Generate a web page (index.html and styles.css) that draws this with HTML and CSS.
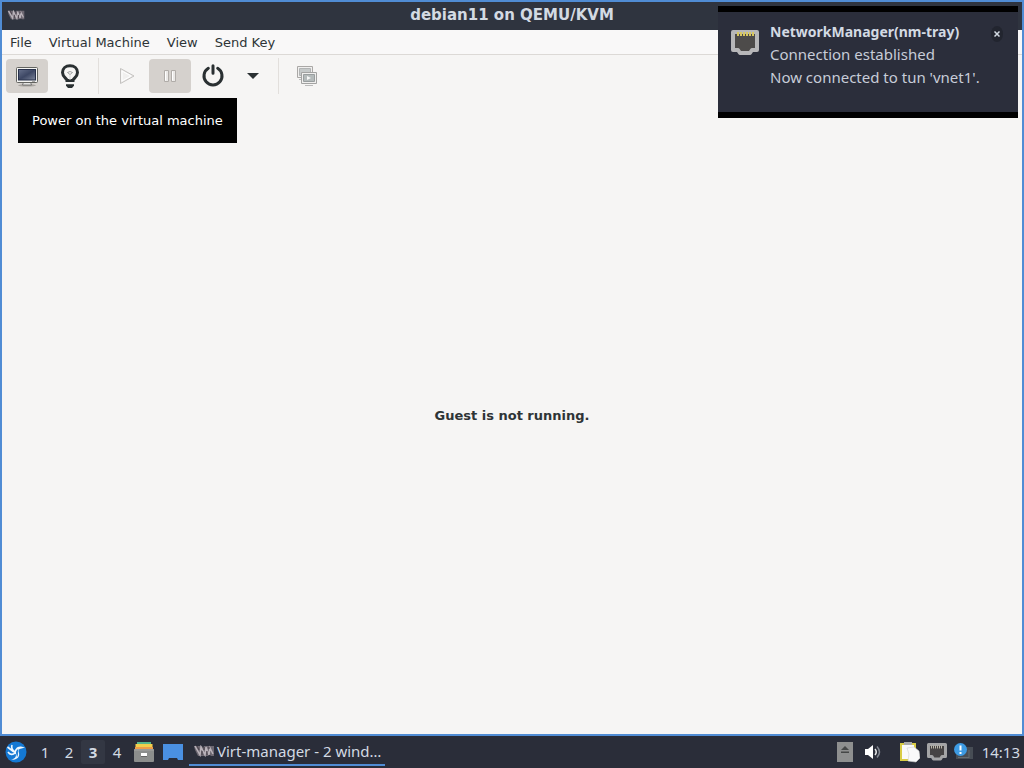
FILE: index.html
```html
<!DOCTYPE html>
<html lang="en">
<head>
<meta charset="utf-8">
<title>debian11 on QEMU/KVM</title>
<link rel="stylesheet" href="styles.css">
</head>
<body>
<svg class="defs" width="0" height="0" aria-hidden="true">
  <symbol id="vm-logo" viewBox="0 0 20 12">
    <path d="M0 1h8l1 2 1-2h10v10h-3l-2-2-1 2H4L1 5z" fill="#6d6872"/>
    <path d="M1 1l5 9 1-8 4 8 1-8 3 8 1-7 3 6" fill="none" stroke="#b9b2b9" stroke-width="1.500"/>
    <path d="M3 1l2 4M10 2v3M8 6v4M15 2v2M13 6v4" stroke="#494049"/>
  </symbol>
</svg>
<main class="window">
  <header class="titlebar">
    <svg class="title-icon" width="18" height="10" aria-hidden="true"><use href="#vm-logo"/></svg>
    <h1 class="title">debian11 on QEMU/KVM</h1>
  </header>
  <nav class="menubar">
    <button class="menu">File</button>
    <button class="menu">Virtual Machine</button>
    <button class="menu">View</button>
    <button class="menu">Send Key</button>
  </nav>
  <div class="toolbar">
    <div class="tool-wrap">
      <button class="tool active" aria-label="Show the graphical console">
        <svg width="24" height="24" viewBox="0 0 24 24">
          <defs><linearGradient id="scr" x2="1" y2="1"><stop stop-color="#67718c"/><stop offset=".5" stop-color="#3d4764"/><stop offset="1" stop-color="#7c859b"/></linearGradient></defs>
          <ellipse cx="12" cy="21.300" rx="9" ry="1.200" fill="#a9a5a0"/>
          <path d="M8.500 18h7l1 3h-9z" fill="#e4e4e2" stroke="#666" stroke-width=".8"/>
          <rect x="1.500" y="3.500" width="21" height="15" rx="1" fill="#f3f3f1" stroke="#62635f"/>
          <rect x="3.500" y="5.500" width="17" height="10.500" fill="url(#scr)" stroke="#27304b"/>
          <path d="M17 17.300h3" stroke="#999"/>
        </svg>
      </button>
      <div class="tooltip" role="tooltip">Power on the virtual machine</div>
    </div>
    <button class="tool" aria-label="Show virtual hardware details">
      <svg width="24" height="24" viewBox="0 0 24 24">
        <path d="M9 16.500c0-2-4.500-3.500-4.500-8C4.500 4.500 7.700 1.700 12 1.700s7.500 2.800 7.500 6.800c0 4.500-4.500 6-4.500 8z" fill="none" stroke="#2a3032" stroke-width="3"/>
        <path d="M9.500 8.500l2.500 2 2.500-2-2.500-1z" fill="none" stroke="#8a8e8e" stroke-width=".8"/>
        <path d="M12 11v5" stroke="#d9dada"/>
        <path d="M8 20.200h8v1.500l-2 2.300h-4l-2-2.300z" fill="#2a3032"/>
      </svg>
    </button>
    <span class="divider"></span>
    <button class="tool" aria-label="Power on the virtual machine">
      <svg width="24" height="24" viewBox="0 0 24 24"><path d="M5.500 4.500v15L19 12z" fill="#f1f0ef" stroke="#c4c2c0"/><path d="M7 7v10l9-5z" fill="none" stroke="#fff"/></svg>
    </button>
    <button class="tool active" aria-label="Pause the virtual machine">
      <svg width="24" height="24" viewBox="0 0 24 24"><path d="M6.500 6.500h4v11h-4zM13.500 6.500h4v11h-4z" fill="#ebe9e7" stroke="#b0aca8"/><path d="M7.500 7.500v9M14.500 7.500v9" stroke="#fff"/></svg>
    </button>
    <button class="tool" aria-label="Shut down the virtual machine">
      <svg width="24" height="24" viewBox="0 0 24 24" fill="none" stroke="#2a3032" stroke-width="3" stroke-linecap="round"><path d="M7.300 4.300a9 9 0 1 0 9.400 0M12 1.800v7.500"/></svg>
    </button>
    <button class="tool narrow" aria-label="Shutdown options">
      <svg width="12" height="6" viewBox="0 0 12 6"><path d="M0 0h12L6 6z" fill="#2a3032"/></svg>
    </button>
    <span class="divider"></span>
    <button class="tool" aria-label="Manage snapshots">
      <svg width="24" height="24" viewBox="0 0 24 24">
        <path d="M2.500 2.500h15v11h-15z" fill="#f0efee" stroke="#aaa8a6"/><path d="M4.500 4.500h11v7h-11z" fill="#c5c9c9" stroke="#b2b4b4"/><path d="M4 15.500h5" stroke="#bbb"/>
        <path d="M6.500 8.500h15v11h-15z" fill="#f0efee" stroke="#a3a3a2"/><path d="M8.500 10.500h11v7h-11z" fill="#b5bbbb" stroke="#999e9f"/>
        <path d="M12 12l4 2-4 2z" fill="#f7f7f7"/><path d="M10 21.500h8" stroke="#bbb"/>
      </svg>
    </button>
  </div>
  <section class="console"><p class="status">Guest is not running.</p></section>
</main>

<aside class="notification" role="status">
  <svg class="note-icon" width="28" height="26" viewBox="0 0 28 26">
    <path d="M2 2h24v18h-5l-2 3H9l-2-3H2z" fill="#4d4b4a" stroke="#b7b7b9" stroke-width="4" stroke-linejoin="round"/>
    <path d="M6 4h17" stroke="#d8c760" stroke-width="4" stroke-dasharray="2 1"/>
  </svg>
  <div class="note-text">
    <h2 class="note-title">NetworkManager(nm-tray)</h2>
    <p class="note-line">Connection established</p>
    <p class="note-line">Now connected to tun 'vnet1'.</p>
  </div>
  <button class="note-close" aria-label="Close"><svg width="6" height="6" viewBox="0 0 6 6"><path d="M.5.5l5 5M5.500.5l-5 5" stroke="#d3dae3" stroke-width="1.500"/></svg></button>
</aside>

<footer class="taskbar">
  <button class="start" aria-label="Application menu">
    <svg width="22" height="22" viewBox="0 0 22 22">
      <circle cx="11" cy="11" r="10.500" fill="#1478d3"/>
      <path d="M2.500 6l6.500 5M7 4c-1 3 0 5 3 7M3 11c2 3 5 3 7 1" fill="none" stroke="#eff7fd" stroke-width="1.600"/>
      <path d="M9 12c1-4 3-7 7-6.500l4 1-3.500 1c-3 .5-3.500 2-2.500 4.500 1 4-2 7-8 7 4-1.500 5-3 5-5.500z" fill="#eff7fd"/>
      <path d="M11 12c0-2 1-3.500 2.500-4-1.500 3 .5 5-1.500 8z" fill="#1478d3"/>
    </svg>
  </button>
  <nav class="desktops">
    <button class="desktop">1</button><button class="desktop">2</button><button class="desktop current">3</button><button class="desktop">4</button>
  </nav>
  <button class="launcher" aria-label="File manager">
    <svg width="20" height="20" viewBox="0 0 20 20"><path d="M3 0h14v3H3z" fill="#55b58b"/><path d="M1.500 2h17v3h-17z" fill="#f2cf4c"/><path d="M1 5h18v2H1z" fill="#ef9d48"/><rect y="7" width="20" height="13" rx="1" fill="#8c8e8d"/><path d="M0 8h20" stroke="#a5a6a4"/><path d="M7 11h6v3H7z" fill="#fff"/><path d="M7 14.500h6" stroke="#666"/></svg>
  </button>
  <button class="launcher" aria-label="Show desktop">
    <svg width="20" height="16" viewBox="0 0 20 16"><path d="M0 0h20v16h-5l-1-2H6l-1 2H0z" fill="#4a90e2"/></svg>
  </button>
  <button class="task"><svg class="task-icon" width="20" height="12" aria-hidden="true"><use href="#vm-logo"/></svg><span class="task-label">Virt-manager - 2 wind…</span></button>
  <div class="tray">
    <button class="tray-item" aria-label="Removable media"><svg width="16" height="20" viewBox="0 0 16 20"><path d="M0 0h16v20H0z" fill="#8e8f8f"/><path d="M8 4l4 4H4zM4 9.500h8V11H4z" fill="#454747"/></svg></button>
    <button class="tray-item volume" aria-label="Volume"><svg width="16" height="16" viewBox="0 0 16 16"><path d="M0 5h3l5-4v14l-5-4H0z" fill="#fff"/><path d="M10 5q2.500 3 0 6" fill="none" stroke="#e8e8e8" stroke-width="1.500"/><path d="M12 2.500q5 5.500 0 11" fill="none" stroke="#80858f" stroke-width="1.500"/></svg></button>
    <button class="tray-item" aria-label="Clipboard"><svg width="20" height="22" viewBox="0 0 20 22"><path d="M0 2h16v18H0z" fill="#d9cc45"/><path d="M2 4h12v14H2z" fill="#fafafa"/><path d="M4 1h8v3H4z" fill="#ababa9"/><path d="M7 7l7-1 5 4 1 7-4 4-8-1 1-7z" fill="#fafafa" stroke="#d4d4d2" stroke-width=".6"/></svg></button>
    <button class="tray-item" aria-label="Network"><svg width="20" height="18" viewBox="0 0 20 18"><path d="M1.500 1.500h17v12H15l-1.500 2.500h-7L5 13.500H1.500z" fill="#464344" stroke="#a4a4a6" stroke-width="3" stroke-linejoin="round"/><path d="M4 4h12" stroke="#bab6a9" stroke-width="3" stroke-dasharray="1 1"/></svg></button>
    <button class="tray-item" aria-label="Updates"><svg width="20" height="18" viewBox="0 0 20 18"><path d="M7 4h12v12H2v-5z" fill="#474d55"/><path d="M15 7v8M4 14.500h11" stroke="#666c70"/><circle cx="6.500" cy="6.500" r="6.500" fill="#3d9be4"/><path d="M6.500 2.500v5M6.500 9v2" stroke="#fff" stroke-width="2"/></svg></button>
    <time class="clock">14:13</time>
  </div>
</footer>
</body>
</html>
```
FILE: styles.css
```css
* { box-sizing: border-box; }
body {
  margin: 0;
  min-height: 100vh;
  display: flex;
  flex-direction: column;
  font: 13px/16px "DejaVu Sans", sans-serif;
  color: #2e3436;
  background: #2a2d39;
}
button { border: 0; padding: 0; background: none; font: inherit; color: inherit; }
svg { display: block; flex: none; }
h1, h2, p { margin: 0; }
.defs { position: absolute; }

.window {
  flex: 1;
  display: flex;
  flex-direction: column;
  border: 2px solid #508cd4;
  background: #f6f5f4;
}
.titlebar {
  display: grid;
  grid-template-columns: 24px 1fr 24px;
  align-items: center;
  height: 28px;
  padding: 0 5px 2px;
  background: #2f343f;
}
.title { text-align: center; font-size: 15px; line-height: 18px; color: #d3dae3; }
.menubar { display: flex; gap: 1px; height: 25px; padding-top: 1px; background: #f9f8f8; border-bottom: 1px solid #dcd9d6; }
.menu { padding: 0 8px; }
.toolbar { display: flex; align-items: center; gap: 1px; padding: 3px 4px; }
.tool-wrap { position: relative; }
.tool { width: 42px; height: 34px; display: flex; align-items: center; justify-content: center; border-radius: 4px; }
.tool.active { background: #d5d1cd; }
.tool.narrow { width: 36px; }
.divider { width: 1px; height: 36px; margin: 0 6px; background: #e2dfdc; }
.tooltip {
  position: absolute;
  top: 39px;
  left: 12px;
  padding: 15px 14px;
  white-space: nowrap;
  line-height: 15px;
  background: #000;
  color: #fff;
}
.console { flex: 1; display: flex; align-items: center; justify-content: center; }
.status { font-weight: 700; }

.notification {
  position: absolute;
  top: 6px;
  right: 6px;
  width: 300px;
  min-height: 112px;
  display: flex;
  align-items: flex-start;
  gap: 11px;
  padding: 8px 15px 20px 13px;
  border: solid #000;
  border-width: 6px 0;
  background: #2b2e3b;
  color: #c7ccd8;
  font: 15px/23px "Noto Sans", sans-serif;
}
.note-icon { margin-top: 10px; }
.note-text { flex: 1; white-space: nowrap; }
.note-title { font-size: 14px; line-height: 23px; color: #d3dae3; }
.note-close {
  width: 16px;
  height: 16px;
  margin-top: 6px;
  display: flex;
  align-items: center;
  justify-content: center;
  border-radius: 50%;
  background: #22252f;
}

.taskbar {
  height: 32px;
  display: flex;
  align-items: center;
  padding: 0 4px 0 5px;
  background: #2a2d39;
  color: #d3dae3;
  font: 15px/20px "Noto Sans", sans-serif;
}
.desktops { display: flex; margin: 0 5px 0 6px; }
.desktop { width: 24px; height: 24px; }
.desktop.current { background: #333743; font-weight: 700; border-radius: 2px; }
.launcher { margin-right: 9px; }
.task {
  width: 196px;
  height: 28px;
  display: flex;
  align-items: center;
  gap: 3px;
  padding-left: 5px;
  margin-left: -3px;
  border-bottom: 2px solid #508cd4;
}
.task-label { white-space: nowrap; }
.tray { margin-left: auto; display: flex; align-items: center; gap: 7px; }
.volume { margin: 0 12px 0 5px; }
.clock { margin-left: 1px; }
```
